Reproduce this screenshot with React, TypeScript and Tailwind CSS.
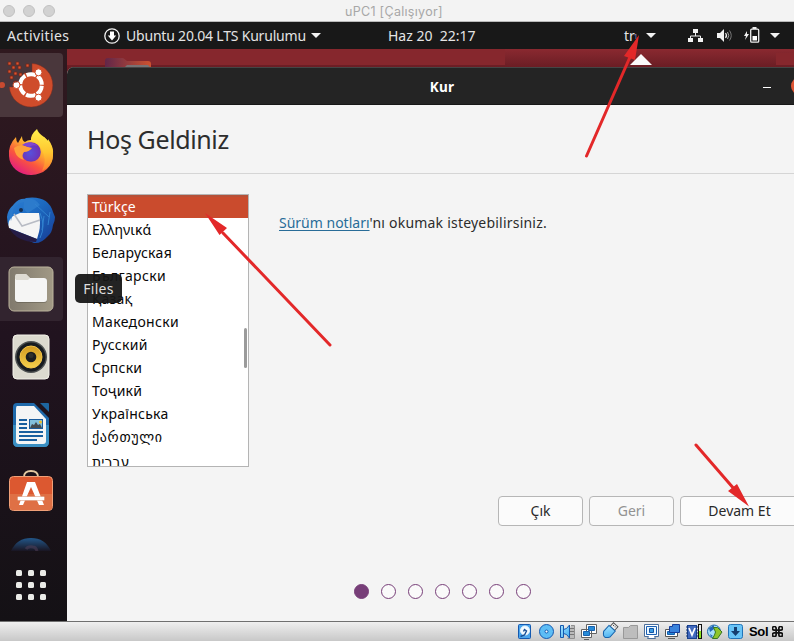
import React from "react";

const languages = [
  { name: "Türkçe", spacing: "tracking-[0px]" },
  { name: "Ελληνικά", spacing: "tracking-[0.05px]" },
  { name: "Беларуская", spacing: "tracking-[0.3px]" },
  { name: "Български", spacing: "tracking-[0.33px]" },
  { name: "Қазақ", spacing: "tracking-[0.2px]" },
  { name: "Македонски", spacing: "tracking-[0.35px]" },
  { name: "Русский", spacing: "tracking-[0.3px]" },
  { name: "Српски", spacing: "tracking-[0.2px]" },
  { name: "Тоҷикӣ", spacing: "tracking-[0.2px]" },
  { name: "Українська", spacing: "tracking-[0.27px]" },
  { name: "ქართული", spacing: "tracking-[0.65px]" },
  { name: "עברית", spacing: "tracking-[0.1px]" },
];

function Caret() {
  return (
    <svg width="10" height="5" viewBox="0 0 10 5" className="shrink-0">
      <path d="M0 0h10L5 5z" fill="#f2f2f2" />
    </svg>
  );
}

function InstallerIcon() {
  return (
    <svg width="48" height="48" viewBox="0 0 48 48">
      <path d="M25 2.500A21.800 21.800 0 1 1 2.300 26H8V22H13V18H17V12H25Z" fill="#cf4c2b" stroke="#7e2d20" strokeWidth=".5" />
      <circle cx="24" cy="24" r="10.800" fill="none" stroke="#fff" strokeWidth="4" strokeDasharray="9.910 1.400" transform="rotate(4 24 24)" />
      <g fill="#fff" stroke="#cf4c2b" strokeWidth="1">
        <circle cx="9.500" cy="24" r="3.500" />
        <circle cx="31.500" cy="11.300" r="3.500" />
        <circle cx="31.500" cy="36.700" r="3.500" />
      </g>
      <path d="M1 1h3v3H1zM9 1h3v3H9zM5 5h3v3H5zM11 5h3v3h-3zM19 3h3v3h-3zM1 9h3v3H1zM7 11h3v3H7zM3 15h3v3H3zM12 12h3v3h-3zM7 20h3v1H7z" fill="#dc5430" stroke="#722619" strokeWidth=".8" />
    </svg>
  );
}

function FirefoxIcon() {
  return (
    <svg width="48" height="48" viewBox="0 0 48 48">
      <defs>
        <linearGradient id="fire" x1=".85" y1=".05" x2=".2" y2=".95">
          <stop offset="0" stopColor="#fff44f" />
          <stop offset=".35" stopColor="#ffb02e" />
          <stop offset=".65" stopColor="#fa563e" />
          <stop offset="1" stopColor="#e01a83" />
        </linearGradient>
        <linearGradient id="tail" x1="0" y1="0" x2="0" y2="1">
          <stop stopColor="#fff04c" />
          <stop offset=".55" stopColor="#ffc630" />
          <stop offset="1" stopColor="#ff7e30" />
        </linearGradient>
        <radialGradient id="globe" cx=".45" cy=".55">
          <stop stopColor="#5751dc" />
          <stop offset="1" stopColor="#6f32b5" />
        </radialGradient>
      </defs>
      <path d="M9 9Q9 13 11 15L15 8Q15 13 18 14Q23 10 30 14L37 9Q47 17 46 27A22 19.500 0 0 1 2 28Q1 17 9 9Z" fill="url(#fire)" />
      <path d="M30 1Q31 5 37 9Q40 11 41 15V11Q47 19 46 27Q45 38 35 43Q41 32 34 20Q30 14 24 13Q23 7 30 1Z" fill="url(#tail)" />
      <circle cx="24" cy="24" r="9.800" fill="url(#globe)" />
      <path d="M7 20Q13 15 21 19L25 20Q22 24 17 24Q14 28 17 32Q10 30 8 24Z" fill="#ffa13a" />
      <path d="M15 17Q22 11 31 18Q26 16 22 19Z" fill="#8048d1" />
    </svg>
  );
}

function ThunderbirdIcon() {
  return (
    <svg width="50" height="50" viewBox="0 0 50 50">
      <defs>
        <linearGradient id="bird" x1="0" y1="0" x2="1" y2="1">
          <stop stopColor="#2f83d8" />
          <stop offset=".45" stopColor="#1c69c0" />
          <stop offset="1" stopColor="#173a93" />
        </linearGradient>
      </defs>
      <path d="M17 4L20 2Q42-1 47 16L49 21Q49 25 47 29Q46 37 42 40Q35 48 28 47L12 40Q1 34 1 21Q2 9 17 4Z" fill="url(#bird)" />
      <path d="M7 20L14 17L33 17Q35 28 33 36L31 43L3 32Q1 25 7 20Z" fill="#f5f5f5" />
      <path d="M8 18L16 30L34 24" fill="none" stroke="#b8bcc5" strokeWidth="1.500" />
      <path d="M3 32L31 43L30 46Q11 46 3 32" fill="#251c46" />
      <path d="M20 3Q28 1 34 9L22 17Q16 14 18 6Q10 7 7 14L5 25Q2 15 8 8Q13 2 20 3" fill="#2c7bcc" />
      <circle cx="15" cy="14" r="2" fill="#152d51" />
      <path d="M34 17Q40 30 34 42M38 20L36 34M44 16L42 29M29 8L43 21" stroke="#3183d0" fill="none" />
    </svg>
  );
}

function FilesIcon() {
  return (
    <svg width="46" height="46" viewBox="0 0 46 46">
      <defs><linearGradient id="files"><stop stopColor="#80796d" /><stop offset="1" stopColor="#a19985" /></linearGradient></defs>
      <rect x="1" y="1" width="44" height="44" rx="5" fill="url(#files)" stroke="#bcb49d" />
      <path d="M7 13V11Q7 9 9 9H18L21 12H37Q39 12 39 15V34Q39 37 36 37H10Q7 37 7 34Z" fill="#4c483f" opacity=".4" />
      <path d="M7 15V10Q7 8 9 8H18L22 12V16Z" fill="#dedbd3" />
      <rect x="7" y="12" width="32" height="24" rx="3" fill="#f5f5f4" />
      <path d="M8 9Q8 8 10 8H18L22 12L20 14H8Z" fill="#dedbd3" />
    </svg>
  );
}

function MusicIcon() {
  return (
    <svg width="38" height="46" viewBox="0 0 38 46">
      <defs><linearGradient id="cone" x1="0" y1="0" x2="0" y2="1"><stop stopColor="#d39a20" /><stop offset="1" stopColor="#f3cf4c" /></linearGradient></defs>
      <rect x="1" y="1" width="36" height="44" rx="4" fill="#dcdacf" stroke="#f3f1e9" />
      <circle cx="19" cy="23" r="16" fill="#4e5151" />
      <circle cx="19" cy="23" r="14.500" fill="#171b20" />
      <circle cx="19" cy="23" r="11" fill="url(#cone)" stroke="#f2c34a" />
      <circle cx="19" cy="23" r="5.300" fill="#1b1d20" />
      <circle cx="19" cy="21.500" r="2.500" fill="#30302d" />
    </svg>
  );
}

function WriterIcon() {
  return (
    <svg width="38" height="46" viewBox="0 0 38 46">
      <path d="M5 1H22L37 16V40Q37 45 32 45H6Q1 45 1 40V5Q1 1 5 1Z" fill="#1f6aab" />
      <path d="M1 23H37V40Q37 45 32 45H6Q1 45 1 40Z" fill="#3a8fc2" />
      <path d="M5 4H22L34 17V39Q34 42 31 42H7Q4 42 4 39V7Q4 4 5 4" fill="#f4f5f5" />
      <path d="M28 1H36Q37 1 37 2V10Z" fill="#1d659f" />
      <path d="M7 18H15M7 22H15M7 26H15M7 30H31M7 34H31M7 38H25" stroke="#195f9e" strokeWidth="2" />
      <rect x="17.500" y="17.500" width="13" height="9" fill="#82c0dc" stroke="#1b5c9c" />
      <path d="M18 26L20 22L22 23L24 20L26 23L28 22L30 26Z" fill="#434b50" />
      <circle cx="28.500" cy="20" r="1.500" fill="#eebf29" />
    </svg>
  );
}

function SoftwareIcon() {
  return (
    <svg width="46" height="46" viewBox="0 0 46 46">
      <path d="M16 10V8Q16 2 23 2T30 8V10" fill="none" stroke="#e5c9a1" strokeWidth="1.800" />
      <rect x="1.500" y="7.500" width="43" height="34" rx="4" fill="#dc5830" stroke="#f0a078" />
      <path d="M2 25H44V38Q44 41 41 41H5Q2 41 2 38Z" fill="#df7045" />
      <path d="M19 13H27L36 36H31L23 18L15 36H11Z" fill="#fff" />
      <rect x="9.500" y="27.500" width="27" height="4" rx="1" fill="#fff" stroke="#d28b6c" strokeWidth=".5" />
    </svg>
  );
}

const dockItems = [
  { title: "Installer", icon: <InstallerIcon />, tone: "bg-[#4a373c]" },
  { title: "Firefox", icon: <FirefoxIcon />, tone: "" },
  { title: "Thunderbird", icon: <ThunderbirdIcon />, tone: "" },
  { title: "Files", icon: <FilesIcon />, tone: "bg-[#32242f]" },
  { title: "Music", icon: <MusicIcon />, tone: "" },
  { title: "Writer", icon: <WriterIcon />, tone: "" },
  { title: "Software", icon: <SoftwareIcon />, tone: "" },
];

function Dock() {
  return (
    <aside className="flex h-full w-[67px] shrink-0 flex-col bg-linear-to-b from-[#30191f] via-[#21131f] to-[#141115] pt-1">
      <div className="flex flex-col gap-1">
        {dockItems.map((item, index) => (
          <div key={item.title} className={"relative flex h-16 w-[63px] items-center justify-center rounded-r pr-px " + (index === 1 || index === 6 ? "pb-[3px] " : "") + item.tone}>
            {index === 0 && <span className="absolute -left-px top-[29px] size-[6px] rounded-full bg-[#c84a30]" />}
            {item.icon}
          </div>
        ))}
      </div>
      <div className="mt-3 flex h-[14px] w-[62px] justify-center overflow-hidden">
        <svg width="42" height="14" viewBox="0 0 42 14" className="shrink-0">
          <defs><linearGradient id="help" x1="0" y1="0" x2="0" y2="1"><stop stopColor="#22578a" /><stop offset="1" stopColor="#191522" /></linearGradient></defs>
          <path d="M1 14Q7 1 21 1T41 14Z" fill="url(#help)" />
          <path d="M16 12Q18 9 23 10Q26 10 27 14" fill="none" stroke="#55415a" strokeWidth="3" opacity=".5" />
        </svg>
      </div>
      <div className="ml-4 mt-[19px] grid w-[30px] grid-cols-3 gap-[6px]">
        {Array.from({ length: 9 }, (_, i) => <span key={i} className="size-[6px] rounded-[1.5px] bg-[#eaebe7]" />)}
      </div>
    </aside>
  );
}

function TopBar() {
  return (
    <div className="flex h-[27px] shrink-0 items-center bg-[#181818] text-[14px] text-[#e4e4e4]">
      <span className="ml-[7px] w-[97px] whitespace-nowrap tracking-[0.4px]">Activities</span>
      <svg width="16" height="16" viewBox="0 0 16 16" className="shrink-0"><circle cx="8" cy="8" r="7.200" fill="none" stroke="#f3f3f3" strokeWidth="1.300" /><path d="M6 3.500h4v4h2.200L8 12.500 3.800 7.500H6z" fill="#fff" /></svg>
      <span className="ml-[6px] w-[185px] shrink-0 whitespace-nowrap tracking-[-0.2px]">Ubuntu 20.04 LTS Kurulumu</span>
      <Caret />
      <span className="ml-[67px] w-[236px] whitespace-pre">Haz 20  22:17</span>
      <span className="flex w-[22px] items-center">tr<sub className="-ml-px text-[7px] text-[#9396d4]">1</sub></span>
      <Caret />
      <svg width="15" height="14" viewBox="0 0 15 14" className="ml-[32px] shrink-0"><path d="M5 0h5v4H5zM0 9h5v4H0zM10 9h5v4h-5z" fill="#f2f2f2" /><path d="M7.500 4v3M2.500 9V7h10v2" fill="none" stroke="#eee" /></svg>
      <svg width="15" height="13" viewBox="0 0 15 13" className="ml-[14px] shrink-0"><path d="M0 4h3l4-4v13L3 9H0z" fill="#f2f2f2" /><path d="M8.500 4Q10.500 6.500 8.500 9" fill="none" stroke="#eee" strokeWidth="1.200" /><path d="M10.500 3Q13 6.500 10.500 10" fill="none" stroke="#aaa" /><path d="M12.500 1.500Q16 6.500 12.500 11.500" fill="none" stroke="#777" /></svg>
      <svg width="16" height="16" viewBox="0 0 16 16" className="-mt-[2px] ml-[12px] shrink-0"><path d="M3 4L0 9h2l-1 4 4-6H3z" fill="#f2f2f2" /><path d="M8.500 1h4" stroke="#eee" strokeWidth="2" /><rect x="6.700" y="2.200" width="8" height="13" rx="1" fill="none" stroke="#eee" strokeWidth="1.300" /><path d="M8.500 9h4.500v4.500H8.500z" fill="#fff" /></svg>
      <span className="ml-[10px] flex"><Caret /></span>
    </div>
  );
}

function Installer() {
  return (
    <section className="absolute left-0 top-[18px] flex h-[554px] w-[750px] flex-col overflow-hidden rounded-tl-[7px] bg-[#f4f4f4]">
      <header className="flex h-[38px] shrink-0 items-center border-b border-t border-b-[#171717] border-t-[#454545] bg-[#242424] text-white">
        <span className="flex-1 pl-[54px] pt-px text-center text-[13.5px] font-bold leading-5 tracking-[0.3px]">Kur</span>
        <span className="mr-[20px] mt-[3px] h-px w-2 bg-white" />
        <span className="mr-[8px] size-[18px] rounded-full bg-[#df5534]" />
      </header>
      <div className="flex h-[69px] shrink-0 items-center border-b border-[#d5d5d5] pl-5">
        <h1 className="whitespace-nowrap text-[25px] font-normal leading-8 tracking-[-0.38px] text-[#2d2d2d]">Hoş Geldiniz</h1>
      </div>
      <main className="flex h-[293px] shrink-0 pl-5 pt-5">
        <div className="relative h-[273px] w-[162px] overflow-hidden border border-[#b4b4b4] bg-white">
          {languages.map((lang, i) => (
            <div key={lang.name} className={"h-[23px] whitespace-nowrap pl-1 text-[14px] leading-[23px] " + lang.spacing + (i === 0 ? " bg-[#ca4b2d] text-white shadow-[inset_0_2px_0_#b65037]" : i === 11 ? " pt-[2px] text-[#080808]" : " text-[#080808]")}>
              {lang.name}
            </div>
          ))}
          <span className="absolute right-px top-[133px] h-10 w-[3px] rounded bg-[#9b9b9b]" />
        </div>
        <p className="ml-[30px] mt-[19px] whitespace-nowrap text-[14px] leading-5 tracking-[0.21px] text-[#2c2c2c]"><a className="tracking-[0px] text-[#286c98] underline underline-offset-2">Sürüm notları</a>'nı okumak isteyebilirsiniz.</p>
      </main>
      <div className="ml-[431px] mt-[29px] flex h-[30px] shrink-0 gap-[6px] text-[14px] text-[#292929]">
        <button className="w-[85px] rounded-[4px] border border-[#b6b6b6] bg-[#fbfbfb] pb-px">Çık</button>
        <button className="w-[85px] rounded-[4px] border border-[#b6b6b6] bg-[#f9f9f9] pb-px text-[#929292]">Geri</button>
        <button className="w-[119px] rounded-[4px] border border-[#b6b6b6] bg-[#fbfbfb] pb-px">Devam Et</button>
      </div>
      <div className="ml-[287px] mt-[58px] flex shrink-0 gap-3">
        {Array.from({ length: 7 }, (_, i) => <span key={i} className={"size-[15px] rounded-full border border-[#773e78] " + (i === 0 ? "bg-[#773e78]" : "bg-[#fafafa]")} />)}
      </div>
    </section>
  );
}

function StatusBar() {
  return (
    <footer className="flex h-5 shrink-0 items-center border-t border-[#707070] bg-linear-to-b from-[#efefef] to-[#c8c8c8]">
      <svg width="230" height="19" viewBox="517 622 230 19" className="ml-[517px] shrink-0">
        <defs><linearGradient id="blue" x1="0" y1="0" x2="1" y2="1"><stop stopColor="#a5e4ff" /><stop offset="1" stopColor="#3fabf0" /></linearGradient></defs>
        <g stroke="#1459b0" fill="url(#blue)">
          <rect x="518.500" y="624.500" width="12" height="14" rx="1" fill="#4ba5ec" />
          <circle cx="525" cy="630.500" r="4.500" fill="#f4fbff" stroke="#e8f6ff" />
          <path d="M520.500 636.500l4-1.500 2-4-2-1.500-1 2" fill="none" stroke="#174f96" strokeWidth="1.400" />
          <circle cx="546.500" cy="631.500" r="7" fill="#5dbdf5" /><circle cx="546.500" cy="631.500" r="1.500" fill="#fff" />
          <path d="M571 625.500h3.500v13h-7" fill="#bbb" stroke="#909090" /><path d="M569 628.500h5M569 631.500h5M569 634.500h5" stroke="#777" />
          <path d="M560.500 625.500h3v12h-3zM563.500 629.500l3-1 3-3.500v13l-3-3.500-3-1z" />
        </g>
        <g stroke="#626262" fill="#fff">
          <path d="M586.500 624.500h10v9h-10zM581.500 629.500h10v8h-10zM584 639.500h5" />
          <path d="M588.500 626.500h6v4h-6zM583.500 631.500h6v4h-6z" fill="#268bd7" stroke="#1761af" />
        </g>
        <g transform="rotate(42 610 631)"><path d="M607 622.500h6v5h-6z" fill="#f5f5f5" stroke="#555" /><path d="M609 624v1M611 624v1" stroke="#333" /><path d="M605.500 627.500h8.500v8q-4.250 7-8.500 0z" fill="url(#blue)" stroke="#1764ad" /></g>
        <path d="M623.500 627.500h5l2-2h7v13h-14z" fill="#bdbdbd" stroke="#999" />
        <path d="M644.500 624.500h14v12h-4l1 2h-8l1-2h-4z" fill="#fff" stroke="#4b6f9c" /><path d="M646.500 626.500h10v8h-10z" fill="#e8f6ff" stroke="#1b5fb3" /><path d="M649.500 628.500h4v4h-4z" fill="#3c9ce3" stroke="#1454a2" />
        <path d="M665.500 629.500h12v7h-12zM668 638.500h7" fill="#fff" stroke="#555" /><path d="M667.500 631.500h7v3h-7z" fill="#268bd7" stroke="#1761af" /><path d="M669.500 626.500h3v-2h7v8h-10z" fill="#3a83dc" stroke="#173e9b" />
        <rect x="687.500" y="625.500" width="9" height="13" fill="#4169be" stroke="#17408f" /><path d="M686 627h2M686 630h2M686 633h2M686 636h2M696 627h2M696 630h2M696 633h2M696 636h2" stroke="#153776" /><path d="M689 628l3 7 3-7" fill="none" stroke="white" strokeWidth="1.700" />
        <path d="M698 624h4v15h-4z" fill="#111" /><path d="M699 625h2v6h-2z" fill="#eee" /><path d="M699 631h2v7h-2z" fill="#8be31c" />
        <circle cx="714" cy="631.500" r="6.500" fill="#a5def8" stroke="#216ba9" /><path d="M709 628l5-3v4l-4 3zM710 634l3 2-2 1z" fill="#2466b8" />
        <path d="M713.500 627.500h4l4.500 4.500-4.500 6.500h-5l2-3.500 1-3z" fill="#8fc52b" stroke="#387723" />
        <rect x="728.500" y="624.500" width="14" height="14" rx="2" fill="#69c4f7" stroke="#2174b9" /><path d="M734 627h3v4h3l-4.500 5-4.500-5h3z" fill="#163e6f" />
      </svg>
      <span className="ml-[2px] flex items-center gap-1 text-[13px] font-bold leading-4 text-black"><span className="font-['Liberation_Sans',sans-serif] tracking-[-0.3px]">Sol</span>
        <svg width="11" height="11" viewBox="0 0 24 24" fill="none" stroke="#111" strokeWidth="3.800"><path d="M9 9V5a4 4 0 1 0-4 4h14a4 4 0 1 0-4-4v14a4 4 0 1 0 4-4H5a4 4 0 1 0 4 4Z" /></svg>
      </span>
    </footer>
  );
}

function Arrows() {
  return (
    <svg className="pointer-events-none absolute inset-0" width="794" height="641" viewBox="0 0 794 641">
      <g stroke="#e32829" strokeWidth="3" strokeLinecap="round"><path d="M586.500 156L630 57M330 345L223 233M696 445L735 490" /></g>
      <g fill="#e32829"><path d="M639 35L624 56L635 60ZM205 213L219.500 235L227 228ZM749 506.500L728 491L737 484Z" /></g>
    </svg>
  );
}

export default function App() {
  return (
    <div className="relative flex h-[641px] w-[794px] flex-col overflow-hidden bg-[#f3f3f3] font-['Noto_Sans','DejaVu_Sans',sans-serif]">
      <div className="flex h-[22px] shrink-0 items-center border-b border-[#b9b9b9] bg-[#f3f3f3]">
        <div className="ml-[3px] flex gap-2">{[0, 1, 2].map(i => <span key={i} className="size-3 rounded-full border border-[#c1c1c1] bg-[#d2d2d2]" />)}</div>
        <span className="ml-[290px] mt-[3px] whitespace-nowrap font-['Inter',sans-serif] text-[12.5px] tracking-[0.3px] text-[#a7a7a7]">uPC1 [Çalışıyor]</span>
      </div>
      <TopBar />
      <div className="flex h-[572px] shrink-0">
        <Dock />
        <div className="relative flex-1 overflow-hidden bg-linear-to-b from-[#8a2930] from-0% to-[#671c23] to-[20px]">
          <div className="absolute left-0 top-0 h-4 w-[438px] bg-[#86272d]" />
          <div className="absolute left-[709px] top-1 h-3 w-5 bg-[#86272d]" />
          <svg className="absolute left-[38px] top-[9px]" width="46" height="10" viewBox="0 0 46 10"><defs><linearGradient id="folder"><stop stopColor="#612649" /><stop offset="1" stopColor="#cd5230" /></linearGradient></defs><path d="M0 10V3q0-3 3-3h15l4 3h21q3 0 3 3v4z" fill="url(#folder)" /><path d="M19 10l3-3h21l3 3z" fill="#777274" /></svg>
          <Installer />
          <svg className="absolute left-[563px] top-[5px]" width="22" height="11" viewBox="0 0 22 11"><path d="M0 11L11 0L22 11Z" fill="#fafafa" /></svg>
        </div>
      </div>
      <StatusBar />
      <div className="absolute left-[75px] top-[274px] flex h-[29px] w-[47px] items-center justify-center rounded-[5px] bg-[#171717f2] text-[14px] tracking-[0.3px] text-[#dedede]">Files</div>
      <Arrows />
    </div>
  );
}
